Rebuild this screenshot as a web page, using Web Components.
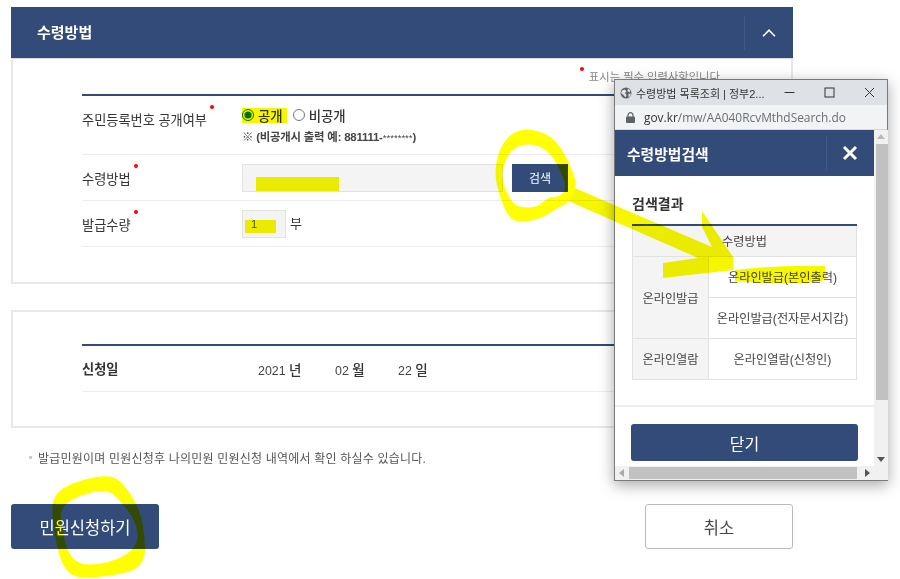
<!DOCTYPE html>
<html lang="ko">
<head>
<meta charset="utf-8">
<title>수령방법</title>
<style>
html { height: 579px; overflow: hidden; background: #fff; }
body {
  position: relative;
  display: flex;
  flex-direction: column;
  margin: 0;
  width: 900px;
  height: 579px;
  padding: 7px 107px 0 11px;
  box-sizing: border-box;
  background: #fff;
  font-family: "Liberation Sans", "Noto Sans CJK KR", sans-serif;
  color: #333;
  filter: blur(.3px);
}
</style>
</head>
<body>
<app-panel heading="수령방법" notice="표시는 필수 입력사항입니다.">
  <form-row label="주민등록번호 공개여부" required size="59" top>
    <disclosure-choice></disclosure-choice>
  </form-row>
  <form-row label="수령방법" required size="46">
    <method-field></method-field>
  </form-row>
  <form-row label="발급수량" required size="46">
    <quantity-field></quantity-field>
  </form-row>
</app-panel>
<app-panel class="plain">
  <form-row label="신청일" size="46" strong>
    <apply-date></apply-date>
  </form-row>
</app-panel>
<note-line>발급민원이며 민원신청후 나의민원 민원신청 내역에서 확인 하실수 있습니다.</note-line>
<action-bar></action-bar>
<popup-window></popup-window>
<marker-layer></marker-layer>

<script>
const panelTemplate = document.createElement("template");
panelTemplate.innerHTML = `
<style>
:host { display: block; width: 782px; }
:host(.plain) { margin-top: 26px; }
header {
  display: flex;
  align-items: center;
  height: 51px;
  background: #334b78;
  color: #fff;
}
h2 { flex: 1; margin: -2px 0 0 26px; font-size: 15px; font-weight: 700; }
.toggle {
  display: flex;
  align-items: center;
  justify-content: center;
  width: 48px;
  height: 34px;
  border-left: 1px solid #41598a;
}
.body {
  border: 2px solid #e8e8e8;
  border-top-width: 1px;
  padding: 0 69px 35px;
}
:host(:not(.plain)) .body { border-top-color: #d8dbe0; }
.notice {
  display: flex;
  justify-content: flex-end;
  box-sizing: border-box;
  height: 35px;
  align-items: flex-end;
  padding-bottom: 10px;
  font-size: 11.3px;
  line-height: 14px;
  color: #888;
}
.notice span { position: relative; left: 1px; }
.notice span::before {
  content: "";
  position: absolute;
  left: -9px;
  top: -3px;
  width: 4px;
  height: 4px;
  border-radius: 50%;
  background: #f00;
}
.rows { border-top: 2px solid #334b78; }
:host(.plain) .rows { margin-top: 32px; }
:host(.plain) .body { border-top-width: 2px; padding-bottom: 34px; }
</style>
<header>
  <h2></h2>
  <div class="toggle">
    <svg width="14" height="8" viewBox="0 0 14 8"><path d="M1 7.2 7 1.2l6 6" fill="none" stroke="#fff" stroke-width="1.6"/></svg>
  </div>
</header>
<div class="body">
  <div class="notice"><span></span></div>
  <div class="rows"><slot></slot></div>
</div>
`;
class AppPanel extends HTMLElement {
  constructor() {
    super();
    this.attachShadow({ mode: "open" });
    this.shadowRoot.appendChild(panelTemplate.content.cloneNode(true));
  }
  connectedCallback() {
    const heading = this.getAttribute("heading");
    if (heading) {
      this.shadowRoot.querySelector("h2").textContent = heading;
      this.shadowRoot.querySelector(".notice span").textContent = this.getAttribute("notice");
    } else {
      this.shadowRoot.querySelector("header").remove();
      this.shadowRoot.querySelector(".notice").remove();
    }
  }
}
customElements.define("app-panel", AppPanel);

const rowTemplate = document.createElement("template");
rowTemplate.innerHTML = `
<style>
:host {
  display: grid;
  grid-template-columns: 160px 1fr;
  align-items: center;
  box-sizing: border-box;
  border-bottom: 1px solid #eee;
  font-size: 13.2px;
  color: #333;
}
label { position: relative; justify-self: start; line-height: 18px; top: 2px; }
:host([top]) label { top: -4px; }
:host([strong]) label { font-weight: 700; top: 1px; }
:host([required]) label::after {
  content: "";
  position: absolute;
  right: -7px;
  top: -7px;
  width: 4px;
  height: 4px;
  border-radius: 50%;
  background: #f00;
}
</style>
<label></label>
<div><slot></slot></div>
`;
class FormRow extends HTMLElement {
  constructor() {
    super();
    this.attachShadow({ mode: "open" });
    this.shadowRoot.appendChild(rowTemplate.content.cloneNode(true));
  }
  connectedCallback() {
    this.shadowRoot.querySelector("label").textContent = this.getAttribute("label");
    this.style.height = this.getAttribute("size") + "px";
  }
}
customElements.define("form-row", FormRow);

class DisclosureChoice extends HTMLElement {
  constructor() {
    super();
    this.attachShadow({ mode: "open" }).innerHTML = `
<style>
:host { display: block; font-size: 13.4px; color: #333; }
.radios { display: flex; align-items: center; height: 18px; }
label { display: flex; align-items: center; gap: 4px; margin-right: 10px; font-weight: 500; }
input { width: 12px; height: 12px; margin: 0; accent-color: #0075ff; }
p { margin: 6px 0 0; font-size: 11.4px; font-weight: 700; color: #444; line-height: 15px; letter-spacing: -.2px; }
p span { font-size: 9.6px; font-weight: 400; letter-spacing: 0; }
</style>
<div class="radios">
  <label><input type="radio" name="open" checked>공개</label>
  <label><input type="radio" name="open">비공개</label>
</div>
<p>※ (비공개시 출력 예: 881111-<span>********</span>)</p>`;
  }
}
customElements.define("disclosure-choice", DisclosureChoice);

class MethodField extends HTMLElement {
  constructor() {
    super();
    this.attachShadow({ mode: "open" }).innerHTML = `
<style>
:host { display: flex; gap: 9px; }
.field { width: 261px; height: 28px; box-sizing: border-box; background: #f4f4f4; border: 1px solid #e2e2e2; }
button {
  width: 56px;
  height: 28px;
  border: 0;
  padding: 0;
  background: #334b78;
  color: #fff;
  font: 12px "Liberation Sans", "Noto Sans CJK KR", sans-serif;
}
</style>
<div class="field"></div>
<button>검색</button>`;
  }
}
customElements.define("method-field", MethodField);

class QuantityField extends HTMLElement {
  constructor() {
    super();
    this.attachShadow({ mode: "open" }).innerHTML = `
<style>
:host { display: flex; align-items: center; gap: 4px; font-size: 13px; color: #333; }
.field {
  width: 44px;
  height: 28px;
  box-sizing: border-box;
  padding-left: 8px;
  background: #f4f4f4;
  border: 1px solid #e2e2e2;
  font-size: 11px;
  line-height: 26px;
  color: #555;
}
span { position: relative; top: -1px; }
</style>
<div class="field">1</div>
<span>부</span>`;
  }
}
customElements.define("quantity-field", QuantityField);

class ApplyDate extends HTMLElement {
  constructor() {
    super();
    this.attachShadow({ mode: "open" }).innerHTML = `
<style>
:host { display: flex; padding-left: 16px; font-size: 12.4px; color: #444; }
span { display: block; }
b { font-weight: 500; font-size: 13.5px; color: #333; }
.year { width: 77px; }
.month { width: 63px; }
</style>
<span class="year">2021 <b>년</b></span>
<span class="month">02 <b>월</b></span>
<span>22 <b>일</b></span>`;
  }
}
customElements.define("apply-date", ApplyDate);

class NoteLine extends HTMLElement {
  constructor() {
    super();
    this.attachShadow({ mode: "open" }).innerHTML = `
<style>
:host {
  display: flex;
  align-items: center;
  gap: 6px;
  margin: 21px 0 0 18px;
  height: 16px;
  font-size: 12px;
  letter-spacing: .2px;
  color: #555;
}
i { width: 3px; height: 3px; background: #ccc; }
</style>
<i></i><span><slot></slot></span>`;
  }
}
customElements.define("note-line", NoteLine);

class ActionBar extends HTMLElement {
  constructor() {
    super();
    this.attachShadow({ mode: "open" }).innerHTML = `
<style>
:host { display: flex; justify-content: space-between; width: 782px; margin-top: 39px; }
button {
  width: 148px;
  height: 45px;
  padding: 0;
  border-radius: 3px;
  font: 16.5px "Liberation Sans", "Noto Sans CJK KR", sans-serif;
}
.primary { background: #334b78; color: #fff; border: 0; }
.cancel { background: #fff; color: #444; border: 1px solid #bbb; }
</style>
<button class="primary">민원신청하기</button>
<button class="cancel">취소</button>`;
  }
}
customElements.define("action-bar", ActionBar);

const popupTemplate = document.createElement("template");
popupTemplate.innerHTML = `
<style>
:host {
  position: absolute;
  left: 614px;
  top: 79px;
  width: 274px;
  height: 402px;
  box-sizing: border-box;
  display: flex;
  flex-direction: column;
  background: #fff;
  border: 1px solid #7a7a7a;
  box-shadow: 0 4px 14px rgba(0, 0, 0, .35);
  font-family: "Liberation Sans", "Noto Sans CJK KR", sans-serif;
  color: #444;
}
.titlebar { display: flex; align-items: center; height: 25px; padding-left: 5px; background: #dee1e6; font-size: 11px; color: #333; }
.titlebar .name { margin-left: 4px; width: 137px; white-space: nowrap; overflow: hidden; }
.titlebar svg.ctl { display: block; }
.controls { display: flex; align-items: center; gap: 29px; margin-left: 11px; }
.urlbar { display: flex; align-items: center; gap: 9px; height: 25px; box-sizing: border-box; padding-left: 11px; background: #f1f3f4; border-bottom: 1px solid #d5d7da; font: 11.9px "Open Sans", "Liberation Sans", sans-serif; color: #6a6f74; }
.urlbar b { font-weight: 400; color: #333; }
.view { flex: 1; min-height: 0; display: grid; grid-template-columns: 1fr 14px; grid-template-rows: 1fr 14px; }
.content { overflow: hidden; }
.head { display: flex; align-items: center; height: 46px; background: #334b78; color: #fff; }
.head h3 { flex: 1; margin: 0 0 0 12px; font-size: 14.8px; font-weight: 700; }
.head .x { display: flex; align-items: center; justify-content: center; width: 45px; padding-right: 2px; height: 34px; border-left: 1px solid #41598a; }
.result { padding: 20px 16px 25px 17px; border-bottom: 2px solid #eee; }
h4 { margin: 0 0 12px; font-size: 14px; line-height: 16px; font-weight: 700; color: #333; }
table { width: 225px; border-collapse: collapse; border-top: 2px solid #334b78; font-size: 12.2px; table-layout: fixed; }
th, td { border: 1px solid #e2e2e2; text-align: center; padding: 0; font-weight: 400; height: 40px; color: #444; }
th { background: #f4f4f4; }
tr:first-child th { height: 30px; }
.foot { padding: 17px 0 0 16px; }
.foot button { display: block; width: 227px; height: 37px; padding: 0; border: 0; border-radius: 3px; background: #334b78; color: #fff; font: 16px "Liberation Sans", "Noto Sans CJK KR", sans-serif; }
.vbar { display: flex; flex-direction: column; align-items: center; background: #f1f1f1; padding-top: 4px; }
.vbar .thumb { width: 12px; height: 256px; margin: 5px 0 0 1px; background: #c1c1c1; }
.vbar .down { margin-top: auto; margin-bottom: 4px; }
.hbar { display: flex; align-items: center; background: #f1f1f1; padding: 0 4px; gap: 5px; }
.hbar .thumb { width: 228px; height: 12px; background: #c1c1c1; }
.hbar .next { margin-left: 3px; }
.corner { background: #f1f1f1; }
</style>
<div class="titlebar">
  <svg width="12" height="12" viewBox="0 0 12 12"><circle cx="6" cy="6" r="5.5" fill="#5f6368"/><path d="M2 3.5 5 2.5 6.5 4.5 5 6 6.5 8 5.5 10.5 3.5 8 1 6zM8 1.5l2.5 2-1 2-2-1.5zM8.5 7l2.5-.5-1 3-1.5.5z" fill="#dee1e6"/></svg>
  <span class="name">수령방법 목록조회 | 정부2...</span>
  <div class="controls">
    <svg class="ctl" width="11" height="11" viewBox="0 0 11 11"><path d="M.5 5.5h10" stroke="#333" fill="none"/></svg>
    <svg class="ctl" width="11" height="11" viewBox="0 0 11 11"><rect x="1" y="1" width="9" height="9" stroke="#333" fill="none"/></svg>
    <svg class="ctl" width="11" height="11" viewBox="0 0 11 11"><path d="M1 1l9 9M10 1l-9 9" stroke="#333" fill="none"/></svg>
  </div>
</div>
<div class="urlbar">
  <svg width="9" height="11" viewBox="0 0 9 11"><path d="M2 5V3.2a2.5 2.5 0 0 1 5 0V5" stroke="#5f6368" stroke-width="1.2" fill="none"/><rect y="4.5" width="9" height="6.5" rx="1" fill="#5f6368"/></svg>
  <span><b>gov.kr</b>/mw/AA040RcvMthdSearch.do</span>
</div>
<div class="view">
  <div class="content">
    <div class="head">
      <h3>수령방법검색</h3>
      <div class="x"><svg width="16" height="16" viewBox="0 0 16 16"><path d="M2 2l12 12M14 2 2 14" stroke="#fff" stroke-width="3" fill="none"/></svg></div>
    </div>
    <div class="result">
      <h4>검색결과</h4>
      <table>
        <colgroup><col style="width:76px"><col></colgroup>
        <tr><th colspan="2">수령방법</th></tr>
        <tr><th rowspan="2">온라인발급</th><td>온라인발급(본인출력)</td></tr>
        <tr><td>온라인발급(전자문서지갑)</td></tr>
        <tr><th>온라인열람</th><td>온라인열람(신청인)</td></tr>
      </table>
    </div>
    <div class="foot"><button>닫기</button></div>
  </div>
  <div class="vbar">
    <svg width="8" height="5" viewBox="0 0 8 5"><path d="M4 0 8 5H0z" fill="#bbb"/></svg>
    <div class="thumb"></div>
    <svg class="down" width="8" height="5" viewBox="0 0 8 5"><path d="M0 0h8L4 5z" fill="#555"/></svg>
  </div>
  <div class="hbar">
    <svg width="5" height="8" viewBox="0 0 5 8"><path d="M5 0v8L0 4z" fill="#aaa"/></svg>
    <div class="thumb"></div>
    <svg class="next" width="5" height="8" viewBox="0 0 5 8"><path d="M0 0v8l5-4z" fill="#555"/></svg>
  </div>
  <div class="corner"></div>
</div>
`;
class PopupWindow extends HTMLElement {
  constructor() {
    super();
    this.attachShadow({ mode: "open" });
    this.shadowRoot.appendChild(popupTemplate.content.cloneNode(true));
  }
}
customElements.define("popup-window", PopupWindow);

// 점들을 지나는 닫힌 곡선 (중점 사이를 quadratic 으로 잇는다)
function smooth(points) {
  const mid = (a, b) => [(a[0] + b[0]) / 2, (a[1] + b[1]) / 2];
  let d = "M" + mid(points[points.length - 1], points[0]).join(" ");
  points.forEach((p, i) => {
    d += "Q" + p.join(" ") + " " + mid(p, points[(i + 1) % points.length]).join(" ");
  });
  return d + "z";
}

const circleTop = smooth([[527,128],[550,135],[563,150],[575,177],[576,187],[570,202],[557,208],[543,218],[520,223],[508,217],[500,197],[494,173],[500,147],[512,133]])
  + smooth([[527,143],[545,148],[557,163],[567,187],[560,197],[548,197],[538,207],[520,208],[510,200],[503,183],[502,170],[510,150]]);
const circleBottom = smooth([[53,495],[73,482],[110,474],[125,485],[140,510],[145,537],[145,560],[133,572],[100,577],[75,578],[63,567],[57,547],[52,517]])
  + smooth([[60,507],[80,495],[107,489],[120,500],[135,520],[139,540],[128,555],[103,564],[80,565],[68,553],[62,530]]);

// 노란 형광펜 표시: 스크린샷 위에 그린 낙서라서 절대좌표로 둔다
class MarkerLayer extends HTMLElement {
  constructor() {
    super();
    this.attachShadow({ mode: "open" }).innerHTML = `
<style>
:host { position: absolute; left: 0; top: 0; width: 900px; height: 579px; mix-blend-mode: multiply; pointer-events: none; }
svg { display: block; }
</style>
<svg width="900" height="579" viewBox="0 0 900 579">
  <g fill="#f6f600">
    <rect x="242" y="108" width="45" height="15"/>
    <rect x="256" y="177" width="83" height="14"/>
    <rect x="245" y="220" width="31" height="13"/>
    <path d="M735 270q40-5 90-4l1 12q-3 5-30 5-30 1-61-2z"/>
    <path d="M570 186 712 247 702 227V211L733 257V270L663 278V263L698 258 566 200z"/>
  </g>
  <g fill="#ff0" fill-rule="evenodd">
    <path d="${circleTop}"/>
    <path d="${circleBottom}"/>
  </g>
</svg>`;
  }
}
customElements.define("marker-layer", MarkerLayer);
</script>
</body>
</html>
